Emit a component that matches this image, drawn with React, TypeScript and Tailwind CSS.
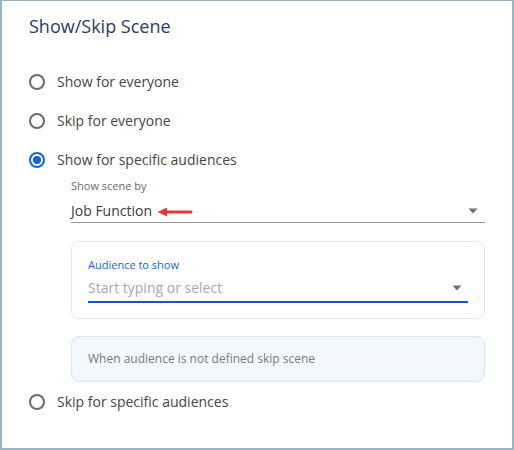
const font = { fontFamily: '"Open Sans", "Liberation Sans", sans-serif' }

function Radio({ checked = false, label }: { checked?: boolean; label: string }) {
  return (
    <div className="flex h-5 items-center">
      <span
        className={
          checked
            ? "flex h-4 w-4 items-center justify-center rounded-full border-2 border-[#1662d8]"
            : "flex h-4 w-4 items-center justify-center rounded-full border-2 border-[#6b6b6b]"
        }
      >
        {checked && <span className="h-2 w-2 rounded-full bg-[#1662d8]" />}
      </span>
      <span className="ml-3 text-[14px] leading-5 text-[#454545]">{label}</span>
    </div>
  )
}

function Caret() {
  return (
    <svg width="10" height="6" viewBox="0 0 10 6" className="shrink-0">
      <path d="M0.5 0.5h9L5 5.5z" fill="#6f6f6f" />
    </svg>
  )
}

export default function App() {
  return (
    <div
      style={font}
      className="h-[450px] w-[514px] border-x-2 border-b-2 border-t border-[#9bb3c1] bg-white pl-[27px] pr-[27px] pt-[13px]"
    >
      <h1 className="text-[18px] leading-6 text-[#2c3a66]">Show/Skip Scene</h1>

      <div className="mt-[34px] flex flex-col gap-[19px]">
        <Radio label="Show for everyone" />
        <Radio label="Skip for everyone" />
        <Radio checked label="Show for specific audiences" />
      </div>

      <div className="ml-[42px] mt-2">
        <div className="text-[11px] leading-4 text-[#6a6a6a]">Show scene by</div>
        <div className="mt-[7px] flex h-[22px] items-start border-b border-[#9a9a9a] pr-[7px]">
          <span className="text-[14px] leading-5 text-[#3a3a3a]">Job Function</span>
          {/* annotation arrow */}
          <svg width="36" height="10" viewBox="0 0 36 10" className="ml-[5px] mt-[6px]">
            <path d="M34 5H8" stroke="#e53535" strokeWidth="3" strokeLinecap="round" />
            <path d="M0.5 5L10 0.5V9.5z" fill="#e53535" />
          </svg>
          <div className="flex-1" />
          <div className="mt-[7px]">
            <Caret />
          </div>
        </div>

        <div className="mt-[18px] rounded-lg border border-[#dfe8f6] px-4 pb-[15px] pt-[15px]">
          <div className="text-[11px] leading-4 text-[#1a5fd8]">Audience to show</div>
          <div className="mt-[5px] flex h-[25px] items-start border-b-2 border-[#0b57d6] pr-[6px]">
            <span className="flex-1 text-[14px] leading-5 text-[#a8a8a8]">Start typing or select</span>
            <div className="mt-[7px]">
              <Caret />
            </div>
          </div>
        </div>

        <div className="mt-[17px] flex h-[46px] items-center rounded-lg border border-[#dae5f6] bg-[#f3f7fe] px-4">
          <span className="text-[12px] leading-4 text-[#7a7a7a]">When audience is not defined skip scene</span>
        </div>
      </div>

      <div className="mt-[10px]">
        <Radio label="Skip for specific audiences" />
      </div>
    </div>
  )
}
